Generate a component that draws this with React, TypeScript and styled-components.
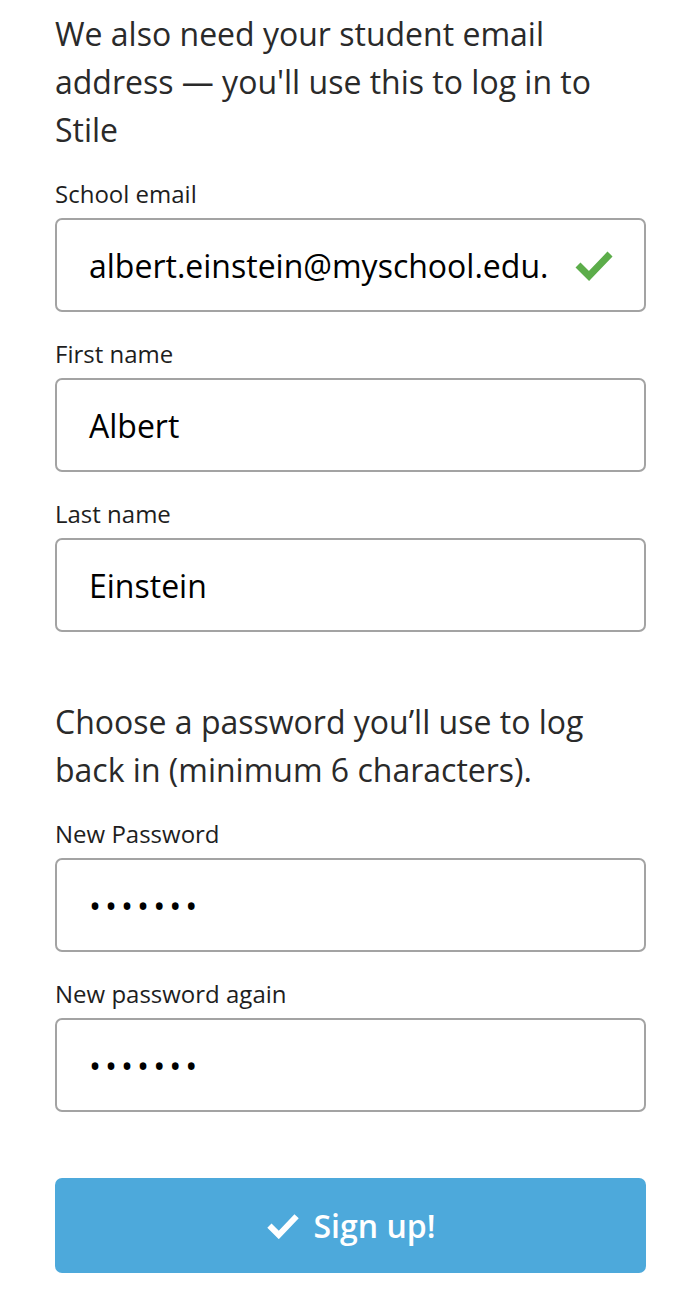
import React from 'react'
import styled, { createGlobalStyle } from 'styled-components'

const GlobalStyle = createGlobalStyle`
  html, body {
    margin: 0;
    padding: 0;
    background: #fff;
  }
  body {
    font-family: 'Open Sans', 'Noto Sans', sans-serif;
    color: #222;
  }
`

const Page = styled.div`
  width: 591px;
  margin-left: 55px;
  padding-top: 10px;
`

const Intro = styled.p<{ $gap?: number }>`
  max-width: 570px;
  margin: ${p => p.$gap || 0}px 0 0 0;
  font-size: 32px;
  line-height: 48px;
  color: #2a2a2a;
`

const Field = styled.div`
  margin-top: 24px;
  & + & {
    margin-top: 26px;
  }
`

const Label = styled.label`
  display: block;
  font-size: 24px;
  line-height: 32px;
  color: #1e1e1e;
  margin-bottom: 8px;
`

const InputBox = styled.div`
  display: flex;
  align-items: center;
  height: 94px;
  box-sizing: border-box;
  border: 2px solid #a3a3a3;
  border-radius: 7px;
  padding: 0 30px 0 32px;
`

const Value = styled.span<{ $secret?: boolean }>`
  flex: 1;
  font-size: 32px;
  color: #000;
  letter-spacing: ${p => (p.$secret ? '4px' : '0')};
`

const SubmitButton = styled.button`
  display: flex;
  align-items: center;
  justify-content: center;
  gap: 14px;
  width: 100%;
  height: 95px;
  margin-top: 66px;
  border: none;
  border-radius: 7px;
  background: #4da9db;
  color: #fff;
  font-family: 'Open Sans', 'Noto Sans', sans-serif;
  font-size: 32px;
  font-weight: 600;
`

const Check = ({ color, size }: { color: string; size: number }) => (
  <svg width={size} height={size * 0.8} viewBox="0 0 40 32">
    <polyline points="4,16 15,27 36,5" fill="none" stroke={color} strokeWidth="7" />
  </svg>
)

const fields = [
  { label: 'School email', value: 'albert.einstein@myschool.edu.', valid: true },
  { label: 'First name', value: 'Albert' },
  { label: 'Last name', value: 'Einstein' },
]

const passwords = [
  { label: 'New Password', value: '•••••••' },
  { label: 'New password again', value: '•••••••' },
]

export default function App() {
  return (
    <Page>
      <GlobalStyle />
      <Intro>
        We also need your student email address — you'll use this to log in to Stile
      </Intro>
      {fields.map(f => (
        <Field key={f.label}>
          <Label>{f.label}</Label>
          <InputBox>
            <Value>{f.value}</Value>
            {f.valid && <Check color="#5cad4a" size={40} />}
          </InputBox>
        </Field>
      ))}
      <Intro $gap={66}>
        Choose a password you’ll use to log back in (minimum 6 characters).
      </Intro>
      {passwords.map(f => (
        <Field key={f.label}>
          <Label>{f.label}</Label>
          <InputBox>
            <Value $secret>{f.value}</Value>
          </InputBox>
        </Field>
      ))}
      <SubmitButton>
        <Check color="#fff" size={34} />
        Sign up!
      </SubmitButton>
    </Page>
  )
}
